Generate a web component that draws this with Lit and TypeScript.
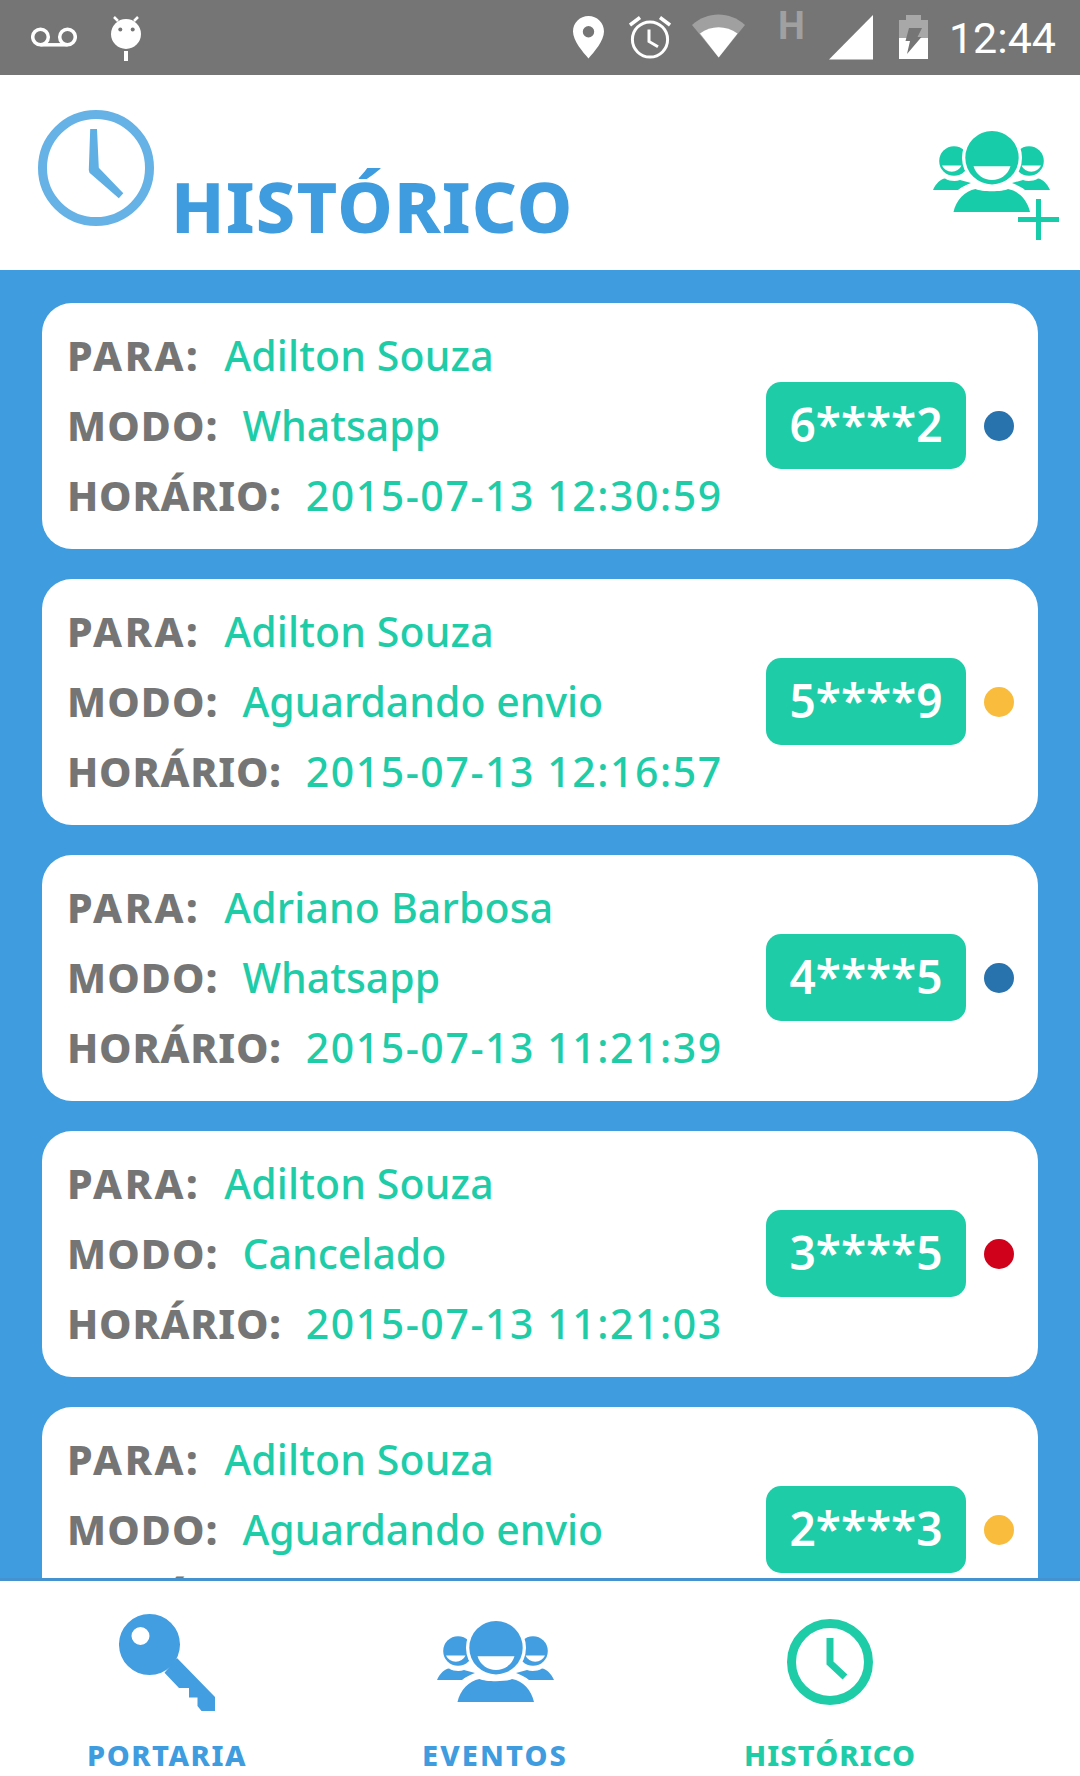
import { LitElement, html, css, svg } from "lit";
import { customElement } from "lit/decorators.js";

const people = svg`
  <circle cx="21" cy="30" r="14.800"/>
  <path d="M9 34.500H28.500A10.800 10.800 0 0 1 9 34.500Z" fill="#fff"/>
  <circle cx="96" cy="30" r="14.800"/>
  <path d="M88.500 34.500H108A10.800 10.800 0 0 1 88.500 34.500Z" fill="#fff"/>
  <circle cx="59" cy="26.700" r="30" fill="#fff"/>
  <circle cx="59" cy="26.700" r="26.700"/>
  <path d="M40.500 35.300H77.500A19.300 19.300 0 0 1 40.500 35.300Z" fill="#fff"/>
  <path d="M0 59C3 52 8 48 12 47.500C17 50.500 23 50.500 27 49L38 52C33 54 28 56 25 59Z"/>
  <path d="M117 59C114 52 109 48 105 47.500C100 50.500 94 50.500 90 49L79 52C84 54 89 56 92 59Z"/>
  <path d="M20.500 81C23 69 32 60 42.500 58C48 61 70 61 75 58C86 60 94.500 69 97 81Z"/>
`;

interface Entry { name: string; mode: string; time: string; code: string; dot: string; }

const entries: Entry[] = [
  { name: "Adilton Souza", mode: "Whatsapp", time: "2015-07-13 12:30:59", code: "6****2", dot: "sent" },
  { name: "Adilton Souza", mode: "Aguardando envio", time: "2015-07-13 12:16:57", code: "5****9", dot: "wait" },
  { name: "Adriano Barbosa", mode: "Whatsapp", time: "2015-07-13 11:21:39", code: "4****5", dot: "sent" },
  { name: "Adilton Souza", mode: "Cancelado", time: "2015-07-13 11:21:03", code: "3****5", dot: "cancel" },
  { name: "Adilton Souza", mode: "Aguardando envio", time: "2015-07-13 11:20:41", code: "2****3", dot: "wait" },
];

@customElement("app-root")
export class AppRoot extends LitElement {
  static styles = css`
    :host { display: block; width: 1080px; height: 1776px; overflow: hidden; background: #fff; font-family: "Noto Sans", sans-serif; }
    svg { display: block; flex: none; }
    .status { display: flex; align-items: center; height: 75px; background: #757575; padding: 0 24px 0 31px; }
    .status .android { margin-left: 34px; }
    .status .loc { margin-left: auto; }
    .status .alarm { margin-left: 24.500px; }
    .status .wifi { margin-left: 21px; }
    .status .h { margin-left: 32px; width: 23px; height: 75px; font: 700 38px/53px Roboto, sans-serif; color: #a0a0a0; }
    .status .sig { margin-left: 28px; }
    .status .bat { margin-left: 26px; }
    .status .time { margin-left: 21px; font: 400 43px/75px Roboto, sans-serif; color: #fff; position: relative; top: 1px; }

    .head { display: flex; height: 195px; background: #fff; padding: 35px 20px 0 38px; box-sizing: border-box; }
    .head .title { margin-left: 17px; font-size: 70px; font-weight: 800; letter-spacing: 1.2px; line-height: 95px; color: #3e9cdf; height: 95px; margin-top: 49px; }
    .head .add { margin-left: auto; margin-top: 21px; }

    .main { height: 1311px; box-sizing: border-box; overflow: hidden; background: #3e9cdf; border-bottom: 3px solid #4492cf; padding: 33px 42px 0; display: flex; flex-direction: column; gap: 30px; }
    .card { flex: none; height: 246px; box-sizing: border-box; background: #fff; border-radius: 30px; display: flex; align-items: center; padding: 0 24px 0 25px; }
    .rows { flex: 1; min-width: 0; margin-top: -3px; }
    .row { display: flex; gap: 24px; font-size: 41px; line-height: 70px; white-space: nowrap; }
    .row b { font-weight: 800; color: #757575; }
    .row span { color: #1fcca8; font-weight: 500; }
    .row.para b { letter-spacing: 2.500px; }
    .row.para span { letter-spacing: 0.150px; }
    .row.modo b { letter-spacing: 1.100px; }
    .row.hor b { letter-spacing: 0.750px; }
    .row.hor span { letter-spacing: 1.550px; }
    .code { width: 200px; height: 87px; margin-top: -1px; border-radius: 15px; background: #1fcca8; color: #fff; font-size: 46px; font-weight: 600; line-height: 85px; text-align: center; }
    .dot { width: 30px; height: 30px; border-radius: 50%; margin-left: 18px; }
    .dot.sent { background: #2872ae; }
    .dot.wait { background: #f9bc3c; }
    .dot.cancel { background: #d0021b; }

    .tabs { height: 195px; display: grid; grid-template-columns: 334px 322px 348px; background: #fff; }
    .tab { display: flex; flex-direction: column; align-items: center; font-size: 29px; font-weight: 800; letter-spacing: 1.100px; white-space: nowrap; color: #3e9cdf; }
    .tab.key { letter-spacing: 1.550px; }
    .tab.ev { letter-spacing: 2.100px; }
    .tab .ico { height: 130px; display: flex; align-items: flex-start; }
    .tab.key .ico svg { margin-top: 33px; }
    .tab.ev .ico svg { margin-top: 40px; }
    .tab.hist { color: #1fcca8; }
    .tab.hist .ico svg { margin-top: 38px; }
    .tab .lab { line-height: 40px; margin-top: 24px; }
  `;

  render() {
    return html`
      <div class="status">
        <svg width="46" height="75" viewBox="0 0 46 75" fill="none" stroke="#fff" stroke-width="3.5"><circle cx="9.500" cy="37" r="7.800"/><circle cx="36.500" cy="37" r="7.800"/><path d="M9.500 44.800H36.500"/></svg>
        <svg class="android" width="30" height="75" viewBox="0 0 30 75" fill="#fff"><circle cx="15" cy="34" r="15"/><circle cx="9.300" cy="29.500" r="2" fill="#757575"/><circle cx="21.700" cy="29.500" r="2" fill="#757575"/><path d="M3 17L7 21M27 17L23 21" stroke="#fff" stroke-width="2.500"/><rect x="13" y="51" width="4" height="10"/></svg>
        <svg class="loc" width="31" height="75" viewBox="0 0 31 75" fill="#fff"><path fill-rule="evenodd" d="M15.500 16C7 16 0 22.700 0 31.500C0 41 10 52 15.500 58.500C21 52 31 41 31 31.500C31 22.700 24 16 15.500 16ZM15.500 26A5.700 5.700 0 1 1 15.500 37.400A5.700 5.700 0 1 1 15.500 26Z"/></svg>
        <svg class="alarm" width="42" height="75" viewBox="0 0 42 75" fill="none" stroke="#fff" stroke-width="3"><circle cx="21" cy="39.500" r="17.600"/><path d="M20 29.500V41.500L29 46.700"/><path d="M1 25L11 17.500M41 25L31 17.500" stroke-width="3.500"/></svg>
        <svg class="wifi" width="54" height="75" viewBox="0 0 54 75"><path d="M0 25C15 11 38 11 53 25L26.700 57.500Z" fill="#a0a0a0"/><path d="M8 33.500C19 25 34 25 45.500 33.500L26.700 57.500Z" fill="#fff"/></svg>
        <div class="h">H</div>
        <svg class="sig" width="44" height="75" viewBox="0 0 44 75"><path d="M0 59.500L44 15V59.500Z" fill="#fff"/></svg>
        <svg class="bat" width="29" height="75" viewBox="0 0 29 75"><path d="M7 15H22V20H29V38H0V20H7Z" fill="#a8a8a8"/><path d="M0 38H29V59H0Z" fill="#fff"/><path d="M10 28H23L18.500 37H22.500L8 54L11 41H6.500Z" fill="#757575"/></svg>
        <div class="time">12:44</div>
      </div>

      <div class="head">
        <svg width="116" height="116" viewBox="0 0 116 116"><circle cx="58" cy="58" r="53.500" fill="none" stroke="#66b2e6" stroke-width="9"/><path d="M52.200 19H59L60.800 57.700L85.300 83.300L80.800 88.300L51.500 62.700L50.800 60Z" fill="#5fafe5"/></svg>
        <div class="title">HISTÓRICO</div>
        <svg class="add" width="127" height="109" viewBox="0 0 127 109" fill="#17cca8">${people}<path d="M85 88.500H126M105.500 68V109" stroke="#17cca8" stroke-width="5"/></svg>
      </div>

      <div class="main">
        ${entries.map((e) => html`
          <div class="card">
            <div class="rows">
              <div class="row para"><b>PARA:</b><span>${e.name}</span></div>
              <div class="row modo"><b>MODO:</b><span>${e.mode}</span></div>
              <div class="row hor"><b>HORÁRIO:</b><span>${e.time}</span></div>
            </div>
            <div class="code">${e.code}</div>
            <div class="dot ${e.dot}"></div>
          </div>`)}
      </div>

      <div class="tabs">
        <div class="tab key">
          <div class="ico"><svg width="96" height="97" viewBox="0 0 96 97" fill="#429ee0"><path fill-rule="evenodd" d="M30.500 0A30.500 30.500 0 1 1 30.500 61A30.500 30.500 0 1 1 30.500 0ZM21.500 13A9 9 0 1 0 21.500 31A9 9 0 1 0 21.500 13Z"/><path d="M58 44L96 83V97H82.500L78.500 92V83.500H70V74H60L45.500 58.700Z"/></svg></div>
          <div class="lab">PORTARIA</div>
        </div>
        <div class="tab ev">
          <div class="ico"><svg width="117" height="81" viewBox="0 0 117 81" fill="#429ee0">${people}</svg></div>
          <div class="lab">EVENTOS</div>
        </div>
        <div class="tab hist">
          <div class="ico"><svg width="86" height="86" viewBox="0 0 86 86" fill="none" stroke="#1fcca8"><circle cx="43" cy="43" r="38.500" stroke-width="9"/><path d="M43 19V44L58 58" stroke-width="7"/></svg></div>
          <div class="lab">HISTÓRICO</div>
        </div>
      </div>
    `;
  }
}
